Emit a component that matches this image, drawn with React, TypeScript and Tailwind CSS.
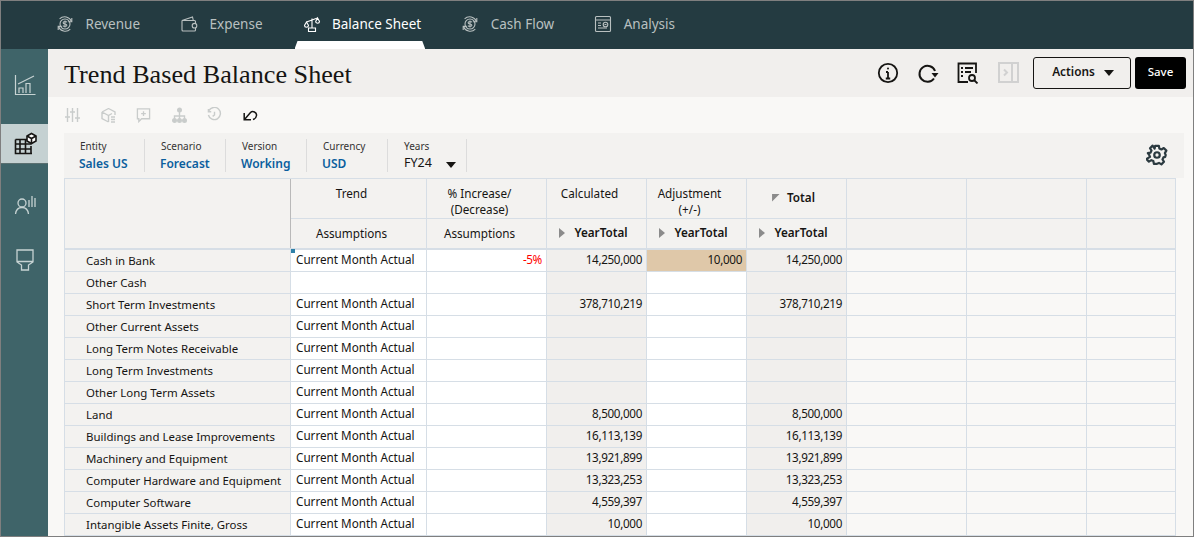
import React from "react";

const S = "#c9cccb";
const Dollar = ({ c }: { c: string }) => (
  <svg width="18" height="18" viewBox="0 0 18 18" fill="none" stroke={c} strokeWidth="1.1">
    <path d="M15.5 6.5A7.3 7.3 0 0 0 3.6 3.8M2.4 11.5a7.3 7.3 0 0 0 11.9 2.7" />
    <path d="M15.8 3v3.7h-3.6M2.2 15v-3.6h3.6" />
    <circle cx="9" cy="9" r="5" />
    <path d="M11 7.2c-.5-.9-3.8-1.100-3.900.5-.1 1.700 3.900.9 3.800 2.600-.1 1.500-3.400 1.300-4 .3M9 5.400v7.200" />
  </svg>
);
const Wallet = () => (
  <svg width="18" height="18" viewBox="0 0 18 18" fill="none" stroke="#b9c0c0" strokeWidth="1.1">
    <path d="M2 5.500v9.500a1 1 0 0 0 1 1h11.500a1 1 0 0 0 1-1v-2M15.500 9V6.500a1 1 0 0 0-1-1H2l10.500-3.500.8 3.500" />
    <circle cx="14.500" cy="10.700" r="2.300" />
  </svg>
);
const Scale = () => (
  <svg width="18" height="18" viewBox="0 0 18 18" fill="none" stroke="#ffffff" strokeWidth="1.100">
    <path d="M9 3.500V13M3.500 7 14.500 3M5.500 16.500h7V13h-7z" />
    <path d="M3.500 7 1.500 10.500a2 1.700 0 0 0 4 0zM14.500 3 12.700 6.500a1.900 1.700 0 0 0 3.800 0z" />
  </svg>
);
const AnalysisIcon = () => (
  <svg width="18" height="18" viewBox="0 0 18 18" fill="none" stroke="#b9c0c0" strokeWidth="1.100">
    <rect x="1.500" y="1.500" width="15" height="15" rx="1" />
    <path d="M1.500 5h15M4 8h3M4 10.500h3M4 13h9" />
    <circle cx="11.500" cy="9.500" r="2.300" />
    <path d="M10.500 9.500h2" />
  </svg>
);

const Tab = ({ icon, label, active }: { icon: React.ReactNode; label: string; active?: boolean }) => (
  <div className="relative mr-[28px] flex h-full items-center gap-[11.500px] pr-[4px] pb-[2px] pl-[8px]">
    {active && (
      <div className="absolute bottom-0 left-0 right-0 h-[8px] bg-white [clip-path:polygon(3px_0,calc(100%-3px)_0,100%_100%,0_100%)]" />
    )}
    <span className="flex h-[18px] w-[18px] items-center justify-center">{icon}</span>
    <span className={`text-[13.500px] whitespace-nowrap ${active ? "text-white" : "text-[#b9c0c0]"}`}>{label}</span>
  </div>
);

const grid = "grid w-[1111px] grid-cols-[226px_136px_120px_100px_100px_100px_120px_120px_89px]";

const rows: [string, boolean, string, string, string][] = [
  ["Cash in Bank", true, "-5%", "14,250,000", "10,000"],
  ["Other Cash", false, "", "", ""],
  ["Short Term Investments", true, "", "378,710,219", ""],
  ["Other Current Assets", true, "", "", ""],
  ["Long Term Notes Receivable", true, "", "", ""],
  ["Long Term Investments", true, "", "", ""],
  ["Other Long Term Assets", true, "", "", ""],
  ["Land", true, "", "8,500,000", ""],
  ["Buildings and Lease Improvements", true, "", "16,113,139", ""],
  ["Machinery and Equipment", true, "", "13,921,899", ""],
  ["Computer Hardware and Equipment", true, "", "13,323,253", ""],
  ["Computer Software", true, "", "4,559,397", ""],
  ["Intangible Assets Finite, Gross", true, "", "10,000", ""],
];

const line = "border-r border-b border-[#d6dee6]";
const head = "border-r border-b border-[#d6dee6] bg-[#f3f2f0] pt-[6px] pr-[14px] text-center leading-[16px]";
const sub = "flex items-center justify-center border-r border-[#d6dee6] bg-[#f3f2f0]";
const num = "pr-[4px] text-right tracking-[-0.35px]";
const Tri = () => <span className="mr-[9px] inline-block h-0 w-0 border-y-[5px] border-l-[6px] border-y-transparent border-l-[#8b8b8b]" />;

const Pov = ({ a, b }: { a: string; b: string }) => (
  <div className="flex h-[33px] w-[81px] flex-col border-r border-[#dcdcdc] pl-4">
    <span className="text-[10px] leading-[14px] text-[#333]">{a}</span>
    <span className="mt-[3px] -ml-px text-[12px] leading-[16px] font-semibold whitespace-nowrap text-[#0b5f9e]">{b}</span>
  </div>
);

export default function App() {
  return (
    <div className="flex h-[537px] w-[1194px] flex-col overflow-hidden border border-[#7f7f7f] bg-[#f9f8f6] text-[#161513] [font-family:'Noto_Sans',sans-serif]">
      <header className="flex h-[48px] shrink-0 items-center bg-[#243b41] pl-[47px]">
        <Tab icon={<Dollar c="#b9c0c0" />} label="Revenue" />
        <Tab icon={<Wallet />} label="Expense" />
        <Tab icon={<Scale />} label="Balance Sheet" active />
        <Tab icon={<Dollar c="#b9c0c0" />} label="Cash Flow" />
        <Tab icon={<AnalysisIcon />} label="Analysis" />
      </header>
      <div className="flex min-h-0 flex-1">
        <aside className="flex w-[47px] shrink-0 flex-col bg-[#3f6469] pt-[15px]">
          <div className="flex h-[42px] items-center justify-center">
            <svg width="22" height="22" viewBox="0 0 22 22" fill="none" stroke="#c7d3d3" strokeWidth="1.200">
              <path d="M1.500 1v19.500h20M4 10 20 2M5 19v-5h4v5M12 19V9.500h4V19" />
            </svg>
          </div>
          <div className="mt-[18px] flex h-[40px] items-center justify-center border-b border-[#5a6f70] bg-[#c5d1d2]">
            <svg width="24" height="24" viewBox="0 0 24 24" fill="none" stroke="#161513" strokeWidth="1.600">
              <path d="M2.500 7.500h12M2.500 12h16M2.500 17h16M7 7.500V21M12.500 7.500V21M18 14v7M2.500 7.500V21.500H19" />
              <path d="M18.500 1.500 23 4v5l-4.500 2.500L14 9V4z" fill="#ffffff" />
              <path d="M14 4l4.500 2.500L23 4M18.500 6.500v5" />
            </svg>
          </div>
          <div className="mt-[20px] flex h-[40px] items-center justify-center">
            <svg width="24" height="24" viewBox="0 0 24 24" fill="none" stroke="#c7d3d3" strokeWidth="1.300">
              <circle cx="9" cy="11" r="4" />
              <path d="M2.500 22c.5-4 3-6.500 6.500-6.500s6 2.500 6.500 6.500M16 8v7M19 4v11M22 6v9" />
            </svg>
          </div>
          <div className="mt-[16px] flex h-[40px] items-center justify-center">
            <svg width="22" height="24" viewBox="0 0 22 24" fill="none" stroke="#c7d3d3" strokeWidth="1.300">
              <path d="M3 2h16v12l-4.500 3v5h-7v-5L3 14zM3 13.500h16" />
            </svg>
          </div>
        </aside>
        <main className="flex min-w-0 flex-1 flex-col">
          <div className="flex h-[48px] shrink-0 items-center bg-[#f1efed] pr-[7px] pl-[16px]">
            <h1 className="pt-[3px] text-[26.200px] leading-[32px] text-[#161513] [font-family:'Liberation_Serif',serif]">Trend Based Balance Sheet</h1>
            <div className="ml-auto flex items-center">
              <svg width="22" height="22" viewBox="0 0 22 22" fill="none" stroke="#161513" strokeWidth="1.800" className="mr-[18px]">
                <circle cx="11" cy="11" r="9.200" />
                <path d="M11 10v6.500M8.800 16.500h4.400M9 10h2" />
                <circle cx="11" cy="6.500" r="1" fill="#161513" stroke="none" />
              </svg>
              <svg width="22" height="22" viewBox="0 0 22 22" fill="none" stroke="#161513" strokeWidth="2" className="mr-[18px]">
                <path d="M18 9A8 8 0 1 0 17 16.500" />
                <path d="M14.500 11h7l-3.500 4.500z" fill="#161513" stroke="none" />
              </svg>
              <svg width="22" height="22" viewBox="0 0 22 22" fill="none" stroke="#161513" strokeWidth="1.800" className="mr-[19px]">
                <path d="M11 20H1.500V1.500h17.500V11" />
                <path d="M4 6h2M8 6h8M4 10h2M8 10h6M4 14h2" />
                <circle cx="15" cy="16" r="3" />
                <path d="m17.500 18.500 3 3" />
              </svg>
              <svg width="22" height="22" viewBox="0 0 22 22" fill="none" stroke="#d1d1d1" strokeWidth="2" className="mr-[13px]">
                <rect x="1" y="1" width="19" height="19" />
                <path d="M14 1v19M6 7.500l3 3-3 3" />
              </svg>
              <button className="flex h-[32px] w-[98px] items-center justify-center gap-[9px] rounded-[3px] border border-[#161513] pb-[2px] pl-[2px] text-[11.800px] font-semibold text-[#161513]">
                Actions
                <span className="mt-[2px] h-0 w-0 border-x-[5px] border-t-[6px] border-x-transparent border-t-[#161513]" />
              </button>
              <button className="ml-[4px] h-[32px] w-[51px] rounded-[3px] bg-black pb-[2px] text-[11.500px] font-medium text-white">Save</button>
            </div>
          </div>
          <div className="flex h-[36px] shrink-0 items-center gap-[20.500px] pb-[1px] pl-[17px]">
            <svg width="15" height="16" viewBox="0 0 15 16" fill="none" stroke={S} strokeWidth="1.400">
              <path d="M2.500 1v14M7.500 1v14M12.500 1v14M0 10h5M5 5h5M10 11h5" />
            </svg>
            <svg width="15" height="16" viewBox="0 0 15 16" fill="none" stroke={S} strokeWidth="1.400">
              <path d="M7.500 1.500 14 5v3M1 5v6.500L7.500 15M1 5l6.500-3.500M1 5l6.500 3.500L11 6.500M7.500 8.500V15M10 10h4M10 12.500h4M10 15h4" />
            </svg>
            <svg width="15" height="16" viewBox="0 0 16 16" fill="none" stroke={S} strokeWidth="1.400">
              <path d="M1.500 1.500h13v10.500H6L3 15v-3H1.500zM8 4v5M5.500 6.500h5" />
            </svg>
            <svg width="15" height="16" viewBox="0 0 15 16" fill="none" stroke={S} strokeWidth="1.400">
              <circle cx="7.500" cy="3" r="1.800" fill={S} />
              <circle cx="2.500" cy="13.500" r="1.800" fill={S} />
              <circle cx="7.500" cy="13.500" r="1.800" fill={S} />
              <circle cx="12.500" cy="13.500" r="1.800" fill={S} />
              <path d="M7.500 5v7M2.500 11.500V9h10v2.500" />
            </svg>
            <svg width="15" height="16" viewBox="0 0 16 16" fill="none" stroke={S} strokeWidth="1.500">
              <path d="M2 3.500A6.500 6.500 0 1 1 1.500 8M1.500 1.500v3h3M8 4.500V8l-2 1.500" />
            </svg>
            <svg width="15" height="14" viewBox="0 0 15 14" fill="none" stroke="#161513" strokeWidth="1.500">
              <path d="M1.500 11.500 7.500 4.500C9.500 2.500 14 4 13.500 7.500 13.300 9.500 12 10.800 10 11.500" />
              <path d="M1.200 5v6.800H8" />
            </svg>
          </div>
          <div className="mr-[9px] ml-[16px] flex h-[45px] shrink-0 items-center bg-[#f3f2f0] pb-[1px]">
            <Pov a="Entity" b="Sales US" />
            <Pov a="Scenario" b="Forecast" />
            <Pov a="Version" b="Working" />
            <Pov a="Currency" b="USD" />
            <div className="relative h-[33px] w-[79px] border-r border-[#dcdcdc] pl-4">
              <div className="text-[10px] leading-[14px] text-[#333]">Years</div>
              <div className="mt-[2px] text-[12.500px] leading-[16px]">FY24</div>
              <span className="absolute right-[10px] bottom-[4px] h-0 w-0 border-x-[5px] border-t-[6px] border-x-transparent border-t-[#161513]" />
            </div>
            <svg width="22" height="22" viewBox="0 0 24 24" fill="none" stroke="#2b3a40" strokeWidth="2.400" className="mr-[16px] ml-auto">
              <circle cx="12" cy="12" r="3" />
              <path d="M10 2h4l.6 3 2.200 1 2.600-1.600 2.800 2.800L20.600 10l.9 2-.5 2-2 .6-1 2.200 1.600 2.600-2.800 2.800-2.600-1.600-2.200 1-.6 0h-2.800l-.6-3-2.200-1-2.600 1.600-2.800-2.800L4.400 14l-1-2.200-1.400-1.800 3-.6 1-2.200L4.400 4.600l2.800-2.800L9.400 5z" strokeLinejoin="round" />
            </svg>
          </div>
          <div className="ml-[16px] min-h-0 w-[1112px] flex-1 overflow-hidden border-t border-l border-[#d6dee6] text-[11.700px] whitespace-nowrap">
            <div className={`${grid} h-[71px] grid-rows-[40px_29px] border-b-2 border-[#d6dee6]`}>
              <div className="row-span-2 border-r border-[#b9b9b9] bg-[#f3f2f0]" />
              <div className={head}>Trend</div>
              <div className={head}>% Increase/<br />(Decrease)</div>
              <div className={head}>Calculated</div>
              <div className={head}>Adjustment<br />(+/-)</div>
              <div className={`${line} flex items-center justify-center bg-[#f3f2f0] pr-[6px] pb-[2px] font-semibold`}>
                <span className="mr-[7px] h-[8px] w-[8px] bg-[#8b8b8b] [clip-path:polygon(0_0,100%_0,0_100%)]" />
                Total
              </div>
              <div className={`${line} bg-[#f3f2f0]`} />
              <div className={`${line} bg-[#f3f2f0]`} />
              <div className={`${line} bg-[#f3f2f0]`} />
              <div className={`${sub} pr-[14px]`}>Assumptions</div>
              <div className={`${sub} pr-[14px]`}>Assumptions</div>
              {[0, 1, 2].map((i) => (
                <div key={i} className={`${sub} pr-[6px] pb-[2px] font-semibold`}>
                  <Tri />
                  YearTotal
                </div>
              ))}
              <div className="border-r border-[#d6dee6] bg-[#f3f2f0]" />
              <div className="border-r border-[#d6dee6] bg-[#f3f2f0]" />
              <div className="border-r border-[#d6dee6] bg-[#f3f2f0]" />
            </div>
            {rows.map(([name, trend, pct, value, adj], i) => (
              <div key={name} className={`${grid} h-[22px] leading-[19px]`}>
                <div className={`${line} bg-[#f3f2f0] pt-[1px] pl-[21px] text-[11.450px]`}>{name}</div>
                <div className={`${line} relative bg-white pl-[5px]`}>
                  {i === 0 && <span className="absolute top-[-1px] left-0 h-[4px] w-[4px] bg-[#2f81a8]" />}
                  {trend ? "Current Month Actual" : ""}
                </div>
                <div className={`${line} bg-white ${num} text-[#f00]`}>{pct}</div>
                <div className={`${line} bg-[#f1efed] ${num}`}>{value}</div>
                <div className={`${line} ${num} ${adj ? "bg-[#dfc8a9]" : "bg-white"}`}>{adj}</div>
                <div className={`${line} bg-[#f1efed] ${num}`}>{value}</div>
                <div className={line} />
                <div className={line} />
                <div className={line} />
              </div>
            ))}
          </div>
        </main>
      </div>
    </div>
  );
}
